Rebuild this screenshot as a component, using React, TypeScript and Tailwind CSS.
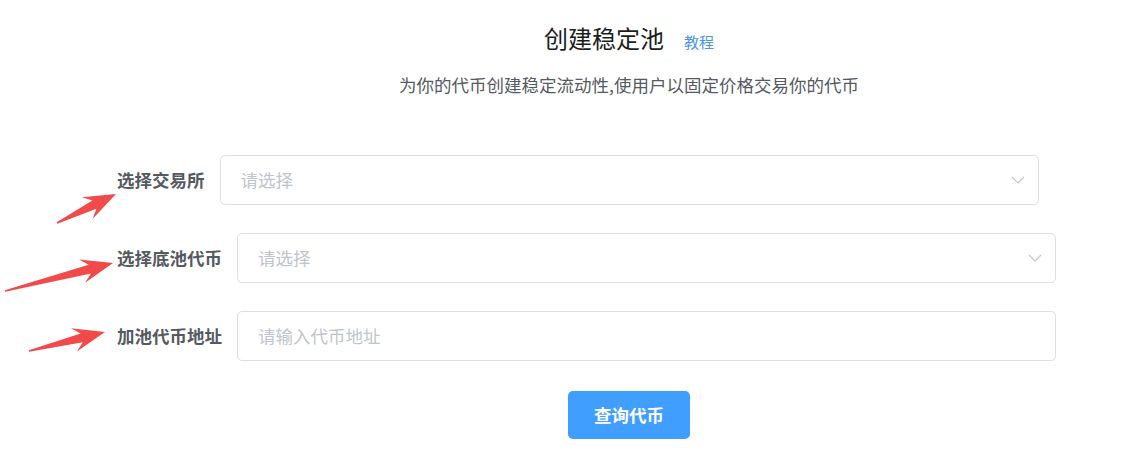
import React from "react";

type ArrowProps = { x: number; y: number; len: number; angle: number };

// red annotation arrow: thin tail, swept-back head
function Arrow({ x, y, len, angle }: ArrowProps) {
  const h = 32;
  const hw = 12;
  const sw = 4.5;
  const pts = [
    [0, -0.8],
    [len - h + 8, -sw],
    [len - h, -hw],
    [len, 0],
    [len - h, hw],
    [len - h + 8, sw],
    [0, 0.8],
  ]
    .map((p) => p.join(","))
    .join(" ");
  return (
    <g transform={`translate(${x},${y}) rotate(${angle})`}>
      <polygon points={pts} fill="#f24a4a" />
    </g>
  );
}

function Chevron() {
  return (
    <svg width="14" height="8" viewBox="0 0 14 8" fill="none">
      <polyline points="1,1 7,7 13,1" stroke="#c0c4cc" strokeWidth="1.1" />
    </svg>
  );
}

function Row({
  label,
  placeholder,
  select,
}: {
  label: string;
  placeholder: string;
  select?: boolean;
}) {
  return (
    <div className="flex items-center gap-[15px]">
      <label className="text-[17.5px] font-bold text-[#555a61] whitespace-nowrap">
        {label}
      </label>
      <div className="flex h-[50px] w-[819px] items-center justify-between rounded-[5px] border border-[#dcdfe6] bg-white pl-[20px] pr-[13px]">
        <span className="text-[17.5px] text-[#c0c4cc]">{placeholder}</span>
        {select && <Chevron />}
      </div>
    </div>
  );
}

export default function App() {
  return (
    <div className="relative h-[454px] w-[1124px] overflow-hidden bg-white font-['Noto_Sans_CJK_SC',sans-serif]">
      <div className="flex items-baseline justify-center pl-[134px] pt-[20px]">
        <h1 className="text-[24px] leading-[36px] text-[#1c1c1c]">创建稳定池</h1>
        <a className="ml-5 text-[15px] text-[#4a94e6]">教程</a>
      </div>
      <p className="mt-[16px] pl-[134px] text-center text-[17.5px] leading-[26px] text-[#555a61]">
        为你的代币创建稳定流动性,使用户以固定价格交易你的代币
      </p>

      <div className="mt-[57px] flex flex-col gap-[28px] pl-[117px]">
        <Row label="选择交易所" placeholder="请选择" select />
        <Row label="选择底池代币" placeholder="请选择" select />
        <Row label="加池代币地址" placeholder="请输入代币地址" />
      </div>

      <div className="mt-[30px] flex justify-center pl-[134px]">
        <button className="h-[48px] w-[122px] rounded-[5px] bg-[#409eff] text-[17.5px] font-bold text-white">
          查询代币
        </button>
      </div>

      <svg className="pointer-events-none absolute left-0 top-0" width="1124" height="454">
        <Arrow x={57} y={223} len={65.7} angle={-26.2} />
        <Arrow x={5} y={291} len={111.6} angle={-14.5} />
        <Arrow x={29} y={351} len={78.3} angle={-14} />
      </svg>
    </div>
  );
}
